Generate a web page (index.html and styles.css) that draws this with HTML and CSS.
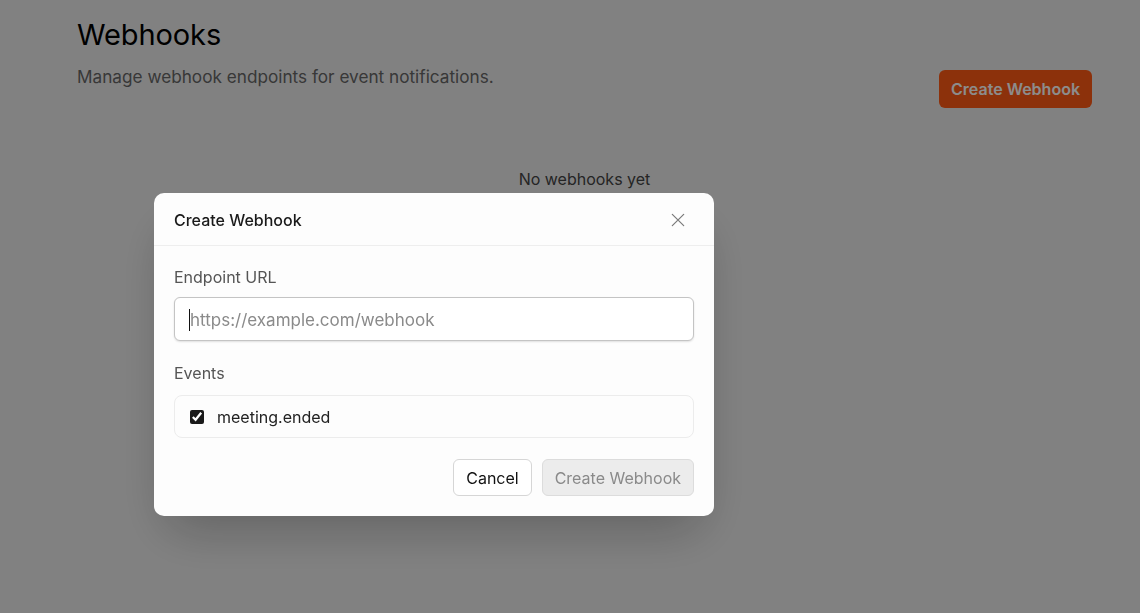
FILE: index.html
```html
<!DOCTYPE html>
<html lang="en">
<head>
<meta charset="utf-8">
<title>Webhooks</title>
<link rel="stylesheet" href="styles.css">
</head>
<body>
<main class="page">
  <header class="page-header">
    <div class="page-heading">
      <h1 class="page-title">Webhooks</h1>
      <p class="page-subtitle">Manage webhook endpoints for event notifications.</p>
    </div>
    <button class="btn-primary" type="button">Create Webhook</button>
  </header>
  <section class="empty-state">
    <p class="empty-text">No webhooks yet</p>
  </section>
</main>

<div class="overlay">
  <div class="dialog" role="dialog" aria-labelledby="dlg-title">
    <div class="dialog-header">
      <h2 class="dialog-title" id="dlg-title">Create Webhook</h2>
      <button class="dialog-close" type="button" aria-label="Close">
        <svg width="16" height="16" viewBox="0 0 16 16" fill="none" stroke="currentColor" stroke-width="1.4" stroke-linecap="round">
          <path d="M1.5 1.5 14.5 14.5M14.5 1.5 1.5 14.5"/>
        </svg>
      </button>
    </div>
    <div class="dialog-body">
      <div class="field">
        <label class="field-label" for="url">Endpoint URL</label>
        <div class="input-wrap">
          <input class="text-input" id="url" type="text" placeholder="https://example.com/webhook">
          <span class="caret"></span>
        </div>
      </div>
      <div class="field">
        <span class="field-label">Events</span>
        <label class="event-box">
          <input class="event-check" type="checkbox" checked>
          <span class="event-name">meeting.ended</span>
        </label>
      </div>
      <div class="dialog-actions">
        <button class="btn-outline" type="button">Cancel</button>
        <button class="btn-disabled" type="button" disabled>Create Webhook</button>
      </div>
    </div>
  </div>
</div>
</body>
</html>
```

FILE: styles.css
```css
* { box-sizing: border-box; }

html, body {
  margin: 0;
  height: 100%;
}

body {
  background: #ececec;
  font-family: Inter, "Noto Sans", "Liberation Sans", sans-serif;
  color: #111;
  overflow: hidden;
}

.page {
  padding: 16px 48px 0 77px;
}

.page-header {
  display: flex;
  justify-content: space-between;
  align-items: flex-start;
}

.page-title {
  margin: 0;
  font-size: 29px;
  font-weight: 400;
  line-height: 38px;
  color: #000;
  letter-spacing: -0.1px;
}

.page-subtitle {
  margin: 10px 0 0;
  font-size: 17.2px;
  line-height: 26px;
  color: #666;
}

.btn-primary {
  margin-top: 54px;
  height: 38px;
  padding: 0 12px;
  border: 0;
  border-radius: 6px;
  background: #ff5a14;
  color: #fff;
  font-family: inherit;
  font-size: 16px;
  font-weight: 600;
}

.empty-state {
  display: flex;
  justify-content: center;
  padding-top: 59px;
}

.empty-text {
  margin: 0;
  font-size: 16px;
  line-height: 24px;
  font-weight: 400;
  color: #444;
}

.overlay {
  position: fixed;
  inset: 0;
  background: rgba(0, 0, 0, 0.45);
  display: flex;
  align-items: flex-start;
  padding: 193px 0 0 154px;
}

.dialog {
  width: 560px;
  background: #fdfdfd;
  border-radius: 10px;
  box-shadow: 0 25px 50px -12px rgba(0, 0, 0, 0.25);
}

.dialog-header {
  display: flex;
  justify-content: space-between;
  align-items: center;
  height: 53px;
  padding: 1px 20px 0;
  border-bottom: 1px solid #eeeeee;
}

.dialog-title {
  margin: 0;
  font-size: 16px;
  font-weight: 500;
  color: #1a1a1a;
}

.dialog-close {
  display: flex;
  align-items: center;
  justify-content: center;
  width: 24px;
  height: 24px;
  margin-right: 4px;
  padding: 0;
  border: 0;
  background: none;
  color: #7a7a7a;
}

.dialog-close svg {
  width: 14px;
  height: 14px;
}

.dialog-body {
  padding: 19px 20px 20px;
  display: flex;
  flex-direction: column;
}

.field {
  display: flex;
  flex-direction: column;
}

.field + .field {
  margin-top: 20px;
}

.field-label {
  font-size: 16px;
  line-height: 24px;
  color: #555;
}

.input-wrap {
  position: relative;
  margin-top: 8px;
}

.text-input {
  display: block;
  width: 100%;
  height: 44px;
  padding: 1px 15px 0;
  border: 1px solid #c4c4c4;
  border-radius: 6px;
  background: #fff;
  box-shadow: 0 1px 2px rgba(0, 0, 0, 0.12);
  font-family: inherit;
  font-size: 17px;
  color: #111;
  outline: none;
}

.text-input::placeholder {
  color: #8a8a8a;
}

.caret {
  position: absolute;
  left: 15px;
  top: 12px;
  width: 1px;
  height: 22px;
  background: #111;
}

.event-box {
  display: flex;
  align-items: center;
  gap: 13px;
  height: 43px;
  margin-top: 10px;
  padding: 0 15px;
  border: 1px solid #ececec;
  border-radius: 8px;
  background: #fdfdfd;
}

.event-check {
  margin: 0;
  width: 14px;
  height: 14px;
  accent-color: #1a1a1a;
}

.event-name {
  font-size: 16px;
  color: #222;
}

.dialog-actions {
  display: flex;
  justify-content: flex-end;
  gap: 10px;
  margin-top: 21px;
}

.btn-outline,
.btn-disabled {
  height: 37px;
  padding: 0 12px;
  border-radius: 6px;
  font-family: inherit;
  font-size: 16px;
}

.btn-outline {
  border: 1px solid #d6d6d6;
  background: #fff;
  color: #111;
}

.btn-disabled {
  border: 1px solid #dcdcdc;
  background: #ececec;
  color: #8a8a8a;
}
```
